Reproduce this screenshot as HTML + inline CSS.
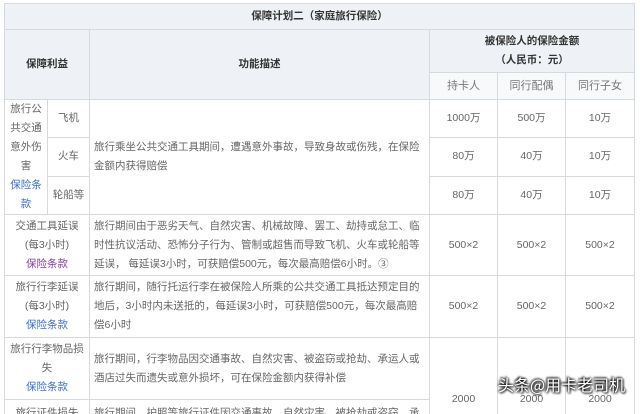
<!DOCTYPE html>
<html><head><meta charset="utf-8"><style>
html,body{margin:0;padding:0;background:#fff;width:640px;height:414px;overflow:hidden;position:relative}
body{font-family:"Liberation Sans","Noto Sans CJK SC",sans-serif;font-size:10.5px;color:#666}
table{position:absolute;left:4px;top:3px;border-collapse:collapse;table-layout:fixed;width:630px}
td,th{border:1px solid #d6d9dd;padding:0 1px;text-align:center;vertical-align:middle;line-height:19px;overflow:hidden}
th{background:#eef1f5;color:#333;font-weight:bold;font-size:10.5px}
.sub{background:#f8f9fa;font-weight:normal;color:#777;font-size:11px}
td.d{text-align:left;padding:0 4px}
a{color:#3a6fc4;text-decoration:none}
a.v{color:#8a3c9a}
.wm{position:absolute;left:498px;top:372px;font-size:16px;white-space:nowrap;color:#fff;font-family:"Noto Sans CJK SC",sans-serif;text-shadow:0 0 2px #000,1px 1px 2px #000,-1px -1px 2px #000}
</style></head><body>
<table>
<colgroup><col style="width:43px"><col style="width:42px"><col style="width:340px"><col style="width:68px"><col style="width:68px"><col style="width:69px"></colgroup>
<tr style="height:26px"><th colspan="6">保障计划二（家庭旅行保险）</th></tr>
<tr style="height:43px"><th colspan="2" rowspan="2">保障利益</th><th rowspan="2">功能描述</th><th colspan="3">被保险人的保险金额<br>（人民币：元）</th></tr>
<tr style="height:27px"><td class="sub">持卡人</td><td class="sub">同行配偶</td><td class="sub">同行子女</td></tr>
<tr style="height:37px"><td rowspan="3">旅行公共交通意外伤害<br><a>保险条款</a></td><td>飞机</td><td class="d" rowspan="3">旅行乘坐公共交通工具期间，遭遇意外事故，导致身故或伤残，在保险金额内获得赔偿</td><td>1000万</td><td>500万</td><td>10万</td></tr>
<tr style="height:38px"><td>火车</td><td>80万</td><td>40万</td><td>10万</td></tr>
<tr style="height:37px"><td>轮船等</td><td>80万</td><td>40万</td><td>10万</td></tr>
<tr style="height:61px"><td colspan="2">交通工具延误<br>(每3小时)<br><a class="v">保险条款</a></td><td class="d">旅行期间由于恶劣天气、自然灾害、机械故障、罢工、劫持或怠工、临时性抗议活动、恐怖分子行为、管制或超售而导致飞机、火车或轮船等延误， 每延误3小时，可获赔偿500元，每次最高赔偿6小时。③</td><td>500×2</td><td>500×2</td><td>500×2</td></tr>
<tr style="height:62px"><td colspan="2">旅行行李延误<br>(每3小时)<br><a>保险条款</a></td><td class="d">旅行期间，随行托运行李在被保险人所乘的公共交通工具抵达预定目的地后，3小时内未送抵的，每延误3小时，可获赔偿500元，每次最高赔偿6小时</td><td>500×2</td><td>500×2</td><td>500×2</td></tr>
<tr style="height:62px"><td colspan="2">旅行行李物品损失<br><a>保险条款</a></td><td class="d">旅行期间，行李物品因交通事故、自然灾害、被盗窃或抢劫、承运人或酒店过失而遗失或意外损坏，可在保险金额内获得补偿</td><td rowspan="2" style="vertical-align:top;padding-top:52px">2000</td><td rowspan="2" style="vertical-align:top;padding-top:52px">2000</td><td rowspan="2" style="vertical-align:top;padding-top:52px">2000</td></tr>
<tr style="height:60px"><td colspan="2" style="vertical-align:top;padding-top:4px">旅行证件损失</td><td class="d" style="vertical-align:top;padding-top:4px">旅行期间，护照等旅行证件因交通事故、自然灾害、被抢劫或盗窃、承运人或酒店过失而遗失或损坏</td></tr>
</table>
<div class="wm">头条@用卡老司机</div>
</body></html>
